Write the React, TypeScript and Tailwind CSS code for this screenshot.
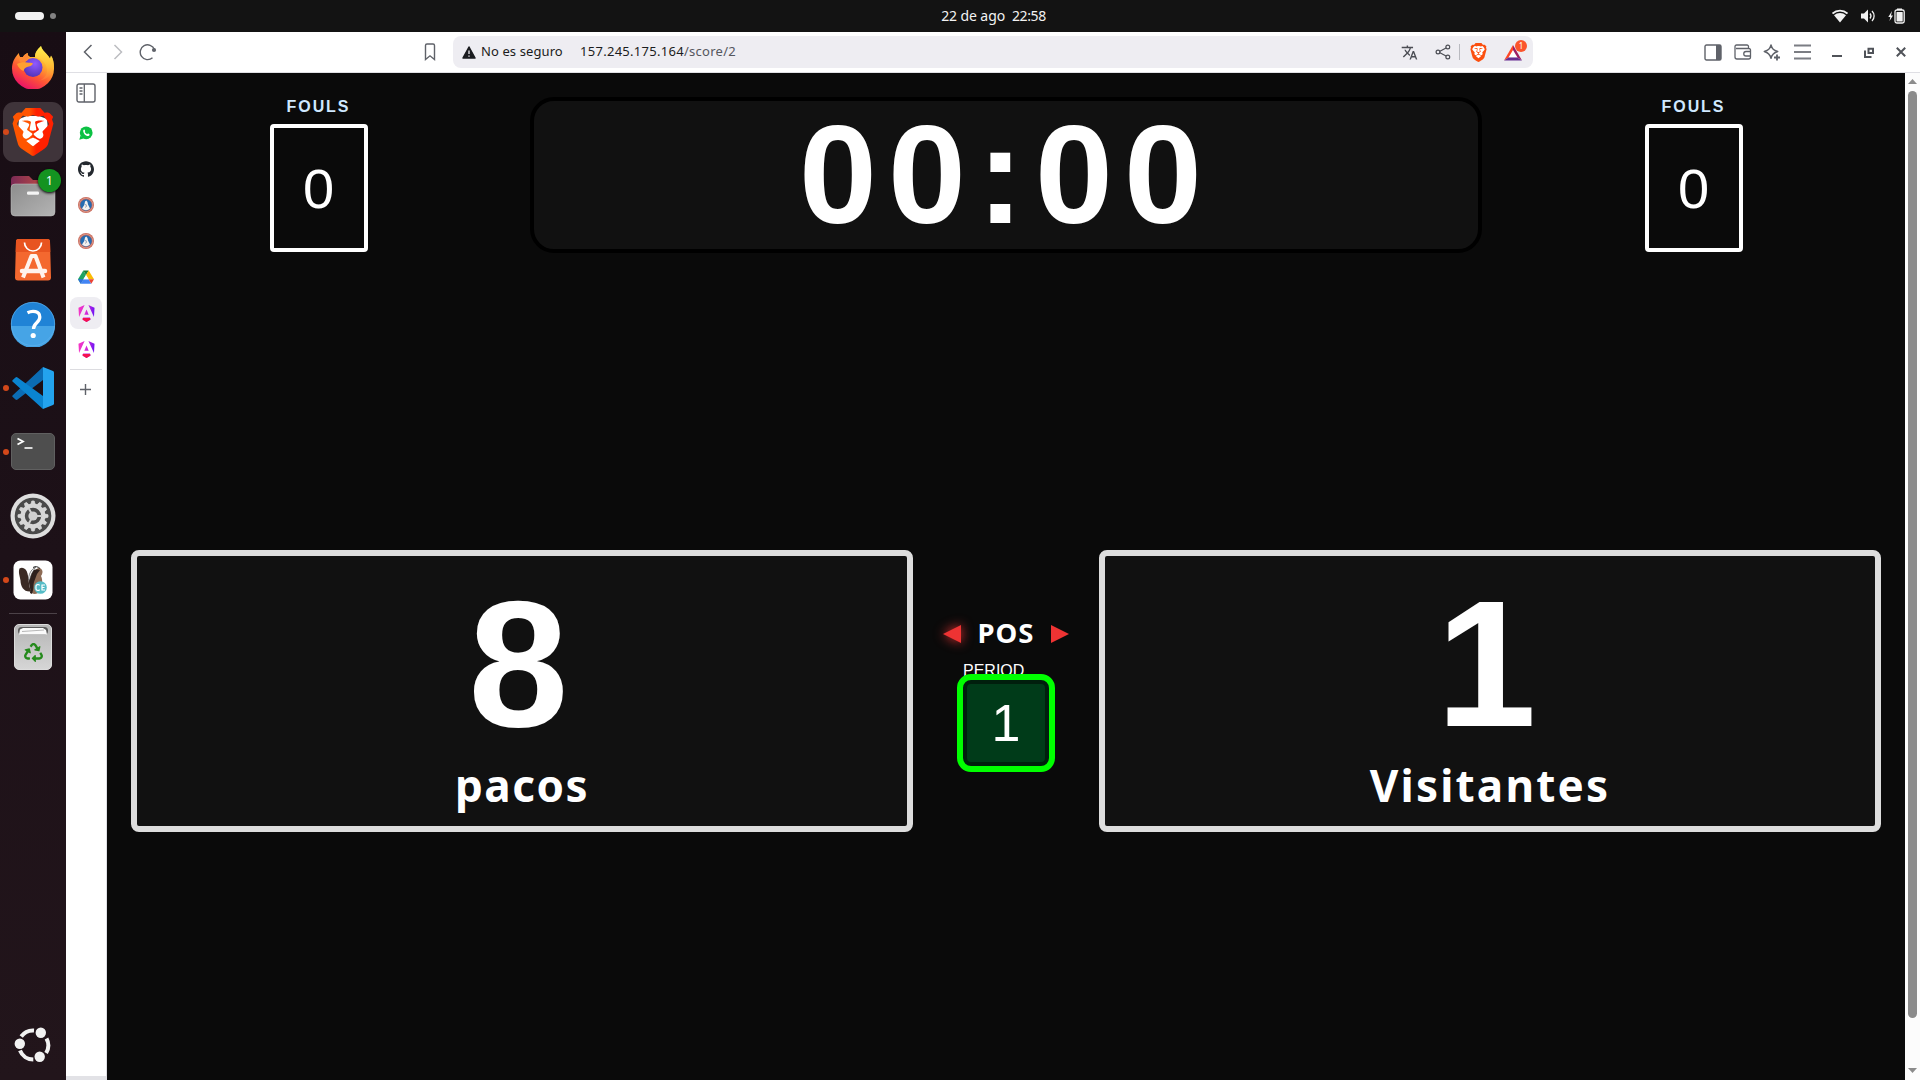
import React from "react";
import { SiBrave, SiGithub, SiAngular } from "react-icons/si";
import { MdTranslate } from "react-icons/md";
import { FaRecycle } from "react-icons/fa";

const ui = "font-['Noto_Sans',sans-serif]";

function Defs() {
  return (
    <svg className="absolute h-0 w-0" aria-hidden>
      <defs>
        <linearGradient id="brave" x1="0" x2="1" y1="0" y2="0">
          <stop offset="0" stopColor="#ff5500" />
          <stop offset="0.41" stopColor="#ff5500" />
          <stop offset="0.58" stopColor="#ff2000" />
          <stop offset="1" stopColor="#ff2000" />
        </linearGradient>
        <linearGradient id="angular" x1="0" x2="1" y1="0.3" y2="0.4">
          <stop offset="0" stopColor="#f637c4" />
          <stop offset="0.5" stopColor="#d62ad9" />
          <stop offset="1" stopColor="#6c14f5" />
        </linearGradient>
        <linearGradient id="foxBody" x1="0.8" x2="0.25" y1="0" y2="1">
          <stop offset="0" stopColor="#fff44f" />
          <stop offset="0.35" stopColor="#ffb02e" />
          <stop offset="0.65" stopColor="#ff5634" />
          <stop offset="1" stopColor="#e80a6e" />
        </linearGradient>
        <linearGradient id="foxTail" x1="0.5" x2="0.5" y1="0" y2="1">
          <stop offset="0" stopColor="#fff44f" />
          <stop offset="0.6" stopColor="#ffb835" />
          <stop offset="1" stopColor="#ff7139" />
        </linearGradient>
        <radialGradient id="globe" cx="0.6" cy="0.3" r="0.8">
          <stop offset="0" stopColor="#9059ff" />
          <stop offset="1" stopColor="#4b2fb0" />
        </radialGradient>
        <linearGradient id="grey" x1="0" x2="1" y1="0" y2="1">
          <stop offset="0" stopColor="#8d8d8d" />
          <stop offset="1" stopColor="#b4b4b4" />
        </linearGradient>
        <linearGradient id="folder" x1="0" x2="1">
          <stop offset="0" stopColor="#7b2a55" />
          <stop offset="1" stopColor="#d2563f" />
        </linearGradient>
        <linearGradient id="trash" x1="0" x2="0" y1="0" y2="1">
          <stop offset="0" stopColor="#b5b5b5" />
          <stop offset="1" stopColor="#d6d6d6" />
        </linearGradient>
      </defs>
    </svg>
  );
}

function Firefox() {
  return (
    <svg className="-mt-[2px]" width="44" height="44" viewBox="0 0 44 44">
      <path d="M30 1c-3 3-6 6-6 11l-5 0c-1-1-3-2-2-4-3 1-4 2-5 4l-3 0C8 11 8 9 8 8 4 12 1 17 1 23.500A21 21 0 0 0 43 23.500c0-5-1-10-3-13l-1 3C36 8 31 6 30 1z" fill="url(#foxBody)" />
      <path d="M30 1c-3 3-6 6-6 11 8 2 13 8 12 15-1 5-5 8-9 9 9-1 16-8 16-14 0-5-1-9-3-11l-1 3C36 8 31 6 30 1z" fill="url(#foxTail)" opacity="0.8" />
      <circle cx="22" cy="22.500" r="9.500" fill="url(#globe)" />
      <path d="M6 19c3-2 7-2 10-1.500 2.500.5 4.500 0 6 1-1 2.500-3.500 3-6 3.500-2 .8-3 2-3.500 4C9.500 25 7 22 6 19z" fill="#ffa030" />
      <path d="M8 8c-1 4 0 6 1 9l7-1 2-4c-1-1-2-2-1-4-3 1-4 2-5 4H9c-1-1-1-3-1-4z" fill="#ff8a35" />
    </svg>
  );
}

function BraveLion({ size, fill }: { size: number; fill: string }) {
  return (
    <span className="relative block">
      <svg className="absolute left-0 top-0" width={size} height={size} viewBox="0 0 48 48">
        <path d="M10 11 18 8h12l8 3 1 12-3 9-7 6-5 1-5-1-7-6-3-9z" fill="#fff" />
      </svg>
      <SiBrave className="relative" size={size} fill={fill} />
    </span>
  );
}

function Files() {
  return (
    <svg width="46" height="42" viewBox="0 0 46 42">
      <path d="M1 5a4 4 0 0 1 4-4h14l4 4h18a4 4 0 0 1 4 4v10H1z" fill="url(#folder)" />
      <rect x="1" y="9" width="44" height="32" rx="4" fill="url(#grey)" stroke="#c4c4c4" strokeWidth="0.5" />
      <rect x="17" y="16.500" width="12" height="3.200" rx="1.300" fill="#f4f4f4" />
    </svg>
  );
}

function Software() {
  return (
    <svg width="38" height="44" viewBox="0 0 38 44">
      <path d="M4.500 1h29a2.500 2.500 0 0 1 2.500 2.500l1 36a3 3 0 0 1-3 3H4a3 3 0 0 1-3-3l1-36A2.500 2.500 0 0 1 4.500 1z" fill="#f4682f" />
      <path d="M4.500 1h29a2.500 2.500 0 0 1 2.500 2.500L36.300 14H1.700L2 3.500A2.500 2.500 0 0 1 4.500 1z" fill="#e85420" />
      <path d="M10.500 4.500a8.500 8.500 0 0 0 17 0" fill="none" stroke="#fff" strokeWidth="1.700" />
      <path d="M9 39.500 17.500 18h4L29.500 39.500" fill="none" stroke="#fff3ed" strokeWidth="4" strokeLinejoin="round" />
      <path d="M8 33h23" stroke="#fff3ed" strokeWidth="4.500" strokeLinecap="round" />
    </svg>
  );
}

function Help() {
  return (
    <svg width="46" height="46" viewBox="0 0 46 46">
      <circle cx="23" cy="23" r="22" fill="#2083d6" />
      <path d="M1 25a22 22 0 0 0 44 0z" fill="#46a4e6" />
      <circle cx="23" cy="23" r="21.700" fill="none" stroke="#5eb2ee" strokeWidth="0.700" />
      <path d="M17.500 11.700c5-2.500 12.300-1.800 12.300 4.300 0 6-6.300 5.500-6.300 12" fill="none" stroke="#fff" strokeWidth="3.300" />
      <circle cx="23.200" cy="34.500" r="2.600" fill="#fff" />
    </svg>
  );
}

function Code() {
  return (
    <svg width="44" height="44" viewBox="0 0 44 44">
      <path d="M1.500 29.500 32 1v13L6.500 33.500a1.500 1.500 0 0 1-2 0l-3-2.700a1 1 0 0 1 0-1.300z" fill="#0b6cb4" />
      <path d="M1.500 15.500 32 43V30L6.500 11.500a1.500 1.500 0 0 0-2 0l-3 2.700a1 1 0 0 0 0 1.300z" fill="#0a84d0" />
      <path d="M32 1l10 4a2 2 0 0 1 1 1.500v31a2 2 0 0 1-1 1.500l-10 4z" fill="#23a3ee" />
    </svg>
  );
}

function Terminal() {
  return (
    <svg className="-mt-px" width="44" height="37" viewBox="0 0 44 37">
      <rect x="0.500" y="0.500" width="43" height="36" rx="4.500" fill="#4e4e4e" stroke="#606060" />
      <path d="M6.500 5.500 12 8.500 6.500 11.500" fill="none" stroke="#fff" strokeWidth="1.800" />
      <path d="M13.500 15h8" stroke="#fff" strokeWidth="1.600" />
    </svg>
  );
}

function Settings() {
  const teeth = Array.from({ length: 12 }, (_, i) => i * 30);
  return (
    <svg width="46" height="46" viewBox="0 0 46 46">
      <circle cx="23" cy="23" r="22.500" fill="#dedede" />
      <circle cx="23" cy="23" r="18.300" fill="#4a4a4a" />
      {teeth.map((a) => (
        <path key={a} d="M21 11l.8-3h2.400L25 11z" fill="#d6d6d6" stroke="#d6d6d6" strokeWidth="0.800" transform={`rotate(${a} 23 23)`} />
      ))}
      <circle cx="23" cy="23" r="10.300" fill="none" stroke="#d6d6d6" strokeWidth="4.200" />
      <circle cx="23" cy="23" r="4.600" fill="#d0d0d0" />
      <path d="M23 23h-8M23 23l4.500-8M23 23l4.500 8" stroke="#d0d0d0" strokeWidth="2" transform="rotate(180 23 23)" />
    </svg>
  );
}

function Beaver() {
  return (
    <svg width="40" height="40" viewBox="0 0 40 40">
      <rect x="0.500" y="0.500" width="39" height="39" rx="7" fill="#fff" />
      <path d="M6.500 8.500c3-2 7 0 8 5 1.500 6 1 11 3.500 18-7 1-10.500-5-10.500-11C7 16.500 5 12.500 6.500 8.500z" fill="#3a2a24" />
      <path d="M17 22c0-5 2-10 6-12 2-3 5-2 6 0 1 1.500.5 4-1 6 2 4 1.500 10-1 15-2 3-6 4-8 2 1-3-1-7-2-11z" fill="#8d6b55" />
      <path d="M19 12c2-3 5-3.500 8-2l-3 4-3 8c-1 4 0 7-2 12l-2-1c1-5-1-7-1-11s1-7 3-10z" fill="#2e211d" />
      <path d="M15.500 20c0-5 2-10 7-13l-4 7-2 6z" fill="#fff" stroke="#333" strokeWidth="0.600" />
      <path d="M20 7.500c2-1.500 5-1 7 1" fill="none" stroke="#222" strokeWidth="1" />
      <circle cx="27.500" cy="27.500" r="6.300" fill="#55bcc7" />
      <path d="M26.600 25.400a2 2 0 0 0-3.600.6v3a2 2 0 0 0 3.600.6M32 25h-3v5h3M29 27.500h2.500" fill="none" stroke="#fff" strokeWidth="1.200" />
    </svg>
  );
}

function Trash() {
  return (
    <div className="relative h-[46px] w-[38px]">
      <svg width="38" height="46" viewBox="0 0 38 46">
        <rect x="0.500" y="0.500" width="37" height="45" rx="4.500" fill="url(#trash)" stroke="#dcdcdc" />
        <rect x="4" y="3" width="30" height="7.500" rx="3.500" fill="#5c5c5c" />
        <path d="M6 5.500 9 4h20l3 2 1 4.500H5z" fill="#fafafa" />
        <path d="M8 7.500 30 6" stroke="#999" strokeWidth="0.700" />
      </svg>
      <FaRecycle className="absolute left-[10px] top-[19px] text-[#258a1c]" size={19} />
    </div>
  );
}

function UbuntuRing() {
  return (
    <svg width="38" height="38" viewBox="0 0 38 38">
      <g fill="none" stroke="#f2f2f2" strokeWidth="4">
        <path d="M7.200 10.500A14.600 14.600 0 0 1 20 4.500" />
        <path d="M32.500 12.500a14.600 14.600 0 0 1-.4 14.500" />
        <path d="M6 24.500A14.600 14.600 0 0 0 19.300 33.600" />
      </g>
      <g fill="#f2f2f2">
        <circle cx="5.800" cy="17.700" r="5.200" />
        <circle cx="26.800" cy="6.700" r="5.200" />
        <circle cx="25.700" cy="30.800" r="5.200" />
      </g>
    </svg>
  );
}

function Badge() {
  return (
    <svg width="16" height="16" viewBox="0 0 16 16">
      <circle cx="8" cy="8" r="8" fill="#c96a5a" />
      <circle cx="8" cy="8" r="6.800" fill="none" stroke="#e3b0a5" strokeWidth="0.600" />
      <circle cx="8" cy="8" r="5.800" fill="#256bb0" />
      <path d="M4 11.500 6.300 8 7 4.500 8.300 3.500 9.500 5l.5 2.500 2 4a5.500 5.500 0 0 1-8 0z" fill="#f3f0ee" />
      <path d="M7.500 7 8.500 9l-1 1.500" fill="none" stroke="#5f7590" strokeWidth="0.700" />
    </svg>
  );
}

function Drive() {
  return (
    <svg width="16" height="14" viewBox="0 0 16 14">
      <path d="M5.300.5 8 5 2.700 13.700 0 9.200z" fill="#1ea362" />
      <path d="M5.300.5h5.400L8 5z" fill="#188038" />
      <path d="M10.700.5 16 9.200h-5.400L8 5z" fill="#fbbc04" />
      <path d="M5.400 9.200h5.200L13.300 13.700H2.700z" fill="#4285f4" />
      <path d="M10.600 9.200H16l-2.700 4.500z" fill="#ea4335" />
      <path d="M0 9.200h5.400l-2.700 4.500z" fill="#2f6fe0" />
      <path d="M8 5 5.400 9.200h5.200z" fill="#fff" />
    </svg>
  );
}

function Angular() {
  return (
    <div className="relative h-[17px] w-[17px]">
      <SiAngular size={17} fill="url(#angular)" />
      <svg className="absolute left-0 top-0" width="17" height="17" viewBox="0 0 16 16">
        <path d="M4.500 12.200h7L11.500 13.800 8 16l-3.500-2.200z" fill="#f5124f" />
      </svg>
    </div>
  );
}

function Whatsapp() {
  return (
    <svg width="14" height="14" viewBox="0 0 14 14">
      <circle cx="7.200" cy="6.800" r="6.400" fill="#0bc143" />
      <path d="M.3 13.800 1.500 9.500l3 3z" fill="#0bc143" />
      <path d="M4.200 4.500c.5-1.300 1.500-1 1.700-.3.500 1.200.1 1.300-.2 1.800.6 1 1.400 1.700 2.400 2.200.6-.7.800-1 1.700-.4 1.300.6.900 1.700-.3 2.200C6.500 10.300 4 7 4.200 4.500z" fill="#fff" />
    </svg>
  );
}

function TopBar() {
  return (
    <header className={`grid h-8 grid-cols-3 items-center bg-[#131313] text-[#f2f2f2] ${ui}`}>
      <div className="flex items-center gap-1.5 pl-[15px]">
        <span className="h-2 w-[29px] rounded-full bg-[#f2f2f2]" />
        <span className="h-1.5 w-1.5 rounded-full bg-[#828282]" />
      </div>
      <div className="flex justify-center gap-[7px] pl-[67px] text-[14px] leading-[30px] whitespace-nowrap">
        <span className="tracking-[-0.1px]">22 de ago</span>
        <span className="tracking-[-0.4px]">22:58</span>
      </div>
      <div className="flex items-center justify-end gap-[13px] pr-[15px]">
        <svg width="16" height="14" viewBox="0 0 16 14">
          <path d="M.5 4.500a11 11 0 0 1 15 0" fill="none" stroke="#f2f2f2" strokeWidth="1.800" />
          <path d="M2 6.300a9 9 0 0 1 12 0L8 13.500z" fill="#f2f2f2" />
        </svg>
        <svg width="14" height="14" viewBox="0 0 14 14">
          <path d="M0 4.500h3L7 .5v13l-4-4H0z" fill="#f2f2f2" />
          <path d="M9 4.500a4 4 0 0 1 0 5M11 2a7 7 0 0 1 0 10" fill="none" stroke="#f2f2f2" strokeWidth="1.300" />
        </svg>
        <svg width="17" height="16" viewBox="0 0 17 16">
          <path d="M4 3 .3 9h2L1.500 13 5 7.500H3z" fill="#f2f2f2" />
          <rect x="7" y="2" width="9.200" height="13" rx="1.800" fill="none" stroke="#f2f2f2" strokeWidth="1.300" />
          <rect x="9" y="0.500" width="5" height="1.500" fill="#f2f2f2" />
          <rect x="8.500" y="4" width="6.200" height="9.500" rx="0.500" fill="#f2f2f2" />
        </svg>
      </div>
    </header>
  );
}

function Slot({ children, dot, active }: { children: React.ReactNode; dot?: boolean; active?: boolean }) {
  return (
    <div className="relative flex h-16 w-[66px] items-center justify-center">
      {dot && <span className="absolute left-[3px] top-[29px] z-10 h-1.5 w-1.5 rounded-full bg-[#d3481a]" />}
      <div className={active ? "flex h-[60px] w-[60px] items-center justify-center rounded-[11px] bg-[#3f343a]" : "flex items-center justify-center"}>
        {children}
      </div>
    </div>
  );
}

function Dock() {
  return (
    <nav className="flex w-[66px] flex-col bg-linear-to-b from-[#180d14] via-[#1d1118] to-[#22151b] pt-1">
      <Slot><Firefox /></Slot>
      <Slot dot active><BraveLion size={48} fill="url(#brave)" /></Slot>
      <Slot>
        <div className="relative">
          <Files />
          <span className={`absolute -right-[5px] -top-[6px] flex h-[23px] w-[23px] items-center justify-center rounded-full bg-[#149321] text-[12px] text-white shadow-[0_1px_3px_#000] ${ui}`}>1</span>
        </div>
      </Slot>
      <Slot><Software /></Slot>
      <Slot><Help /></Slot>
      <Slot dot><Code /></Slot>
      <Slot dot><Terminal /></Slot>
      <Slot><Settings /></Slot>
      <Slot dot><Beaver /></Slot>
      <div className="ml-[9px] mt-[1px] h-px w-12 bg-[#4c4248]" />
      <div className="mt-[10px] flex justify-center"><Trash /></div>
      <div className="mb-[16px] mt-auto flex justify-center"><UbuntuRing /></div>
    </nav>
  );
}

const ink = "#5f6269";

function Toolbar() {
  return (
    <div className={`flex h-[41px] items-center border-b border-[#dfdfe4] bg-white ${ui}`}>
      <svg className="ml-[17px]" width="10" height="16" viewBox="0 0 10 16"><path d="M8.500 1 1.500 8l7 7" fill="none" stroke={ink} strokeWidth="1.500" /></svg>
      <svg className="ml-[20px]" width="10" height="16" viewBox="0 0 10 16"><path d="M1.500 1l7 7-7 7" fill="none" stroke="#bcbdc1" strokeWidth="1.500" /></svg>
      <svg className="ml-[16px]" width="18" height="18" viewBox="0 0 18 18">
        <path d="M13.500 14.800A7.400 7.400 0 1 1 15.500 6.500" fill="none" stroke={ink} strokeWidth="1.400" />
        <circle cx="15" cy="7" r="2.100" fill={ink} />
      </svg>
      <svg className="ml-[266px]" width="14" height="18" viewBox="0 0 14 18"><path d="M2.500 16.500V2.500a1.500 1.500 0 0 1 1.500-1.500h6a1.500 1.500 0 0 1 1.500 1.500v14L7 12.800z" fill="none" stroke={ink} strokeWidth="1.400" /></svg>
      <div className="ml-[16px] flex h-8 w-[1080px] items-center rounded-lg bg-[#eeedf2] pl-[9px]">
        <svg width="14" height="13" viewBox="0 0 14 13">
          <path d="M7 1 13 12H1z" fill="#1b1c20" stroke="#1b1c20" strokeWidth="1.500" strokeLinejoin="round" />
          <path d="M7 4.500v3.500M7 9.500v1.300" stroke="#eeedf2" strokeWidth="1.300" />
        </svg>
        <span className="ml-[5px] w-[99px] text-[13px] tracking-[0.1px] whitespace-nowrap text-[#1b1c20]">No es seguro</span>
        <span className="w-[200px] text-[13px] tracking-[0.28px] whitespace-nowrap text-[#1b1c20]">157.245.175.164<span className="text-[#55575e]">/score/2</span></span>
        <div className="ml-auto flex items-center">
          <MdTranslate size={17} color="#4b4d54" />
          <svg className="ml-[17px]" width="16" height="16" viewBox="0 0 16 16">
            <path d="M3.500 8 12 3.500M3.500 8l8.500 4.500" stroke="#4b4d54" strokeWidth="1.200" />
            <g fill="#eeedf2" stroke="#4b4d54" strokeWidth="1.200"><circle cx="3" cy="8" r="1.900" /><circle cx="12.800" cy="3" r="1.900" /><circle cx="12.800" cy="13" r="1.900" /></g>
          </svg>
          <span className="ml-[8px] h-4 w-px bg-[#b9bac0]" />
          <span className="ml-[9px]"><BraveLion size={19} fill="#fb4f0f" /></span>
          <span className="relative ml-[16px] mr-[11px] mt-[1px] block">
            <svg width="18" height="16" viewBox="0 0 18 16">
              <path d="M9 4.500 13.500 12h-9z" fill="#fff" />
              <path d="M9 0 0 15.500l4.500-3L9 5z" fill="#ff4724" />
              <path d="M9 0v5l4.500 7.500 4.500 3z" fill="#9e1f63" />
              <path d="M0 15.500h18l-4.500-3h-9z" fill="#662d91" />
            </svg>
            <span className="absolute -right-[5px] -top-[5px] flex h-3 w-3 items-center justify-center rounded-full bg-[#fb542b] text-[8px] text-white">1</span>
          </span>
        </div>
      </div>
      <div className="ml-auto flex items-center pr-[14px]">
        <svg width="18" height="17" viewBox="0 0 18 17"><rect x="1" y="1" width="16" height="15" rx="1.500" fill="none" stroke={ink} strokeWidth="1.400" /><rect x="12" y="1" width="5" height="15" fill={ink} /></svg>
        <svg className="ml-[12px]" width="18" height="16" viewBox="0 0 18 16">
          <path d="M14.500 4.500V2.500a1.500 1.500 0 0 0-1.500-1.500H2.500A1.500 1.500 0 0 0 1 2.500v10.500a2 2 0 0 0 2 2h11.500a2 2 0 0 0 2-2V6a1.500 1.500 0 0 0-1.500-1.500H2M16.500 7.500h-4.500a2.200 2.200 0 0 0 0 4.500h4.500" fill="none" stroke={ink} strokeWidth="1.300" />
        </svg>
        <svg className="ml-[11px]" width="18" height="17" viewBox="0 0 18 17">
          <path d="M8 1c1 4 2.500 5.300 6.700 6.500C10.500 8.700 9 10.200 8 14.300 7 10.200 5.500 8.700 1.300 7.500 5.500 6.300 7 5 8 1z" fill="none" stroke={ink} strokeWidth="1.500" strokeLinejoin="round" />
          <path d="M14 10.500v6M11 13.500h6" stroke={ink} strokeWidth="1.800" />
        </svg>
        <svg className="ml-[13px]" width="17" height="16" viewBox="0 0 17 16"><path d="M0 1.500h17M0 8h17M0 14.500h17" stroke="#7b7d83" strokeWidth="1.800" /></svg>
        <svg className="ml-[21px]" width="10" height="12" viewBox="0 0 10 12"><path d="M0 10h10" stroke="#505359" strokeWidth="2" /></svg>
        <svg className="ml-[22px]" width="10" height="11" viewBox="0 0 10 11"><path d="M4.500 1.800h4.500v4.200H4.500zM1 3.500v6.500h6.500" fill="none" stroke="#505359" strokeWidth="2" /></svg>
        <svg className="ml-[22px]" width="10" height="10" viewBox="0 0 10 10"><path d="M.8.800l8.400 8.400M9.200.800.800 9.200" stroke="#505359" strokeWidth="2" /></svg>
      </div>
    </div>
  );
}

function TabCell({ children, active }: { children: React.ReactNode; active?: boolean }) {
  return (
    <div className={`mb-1 flex h-8 w-8 items-center justify-center rounded-lg ${active ? "bg-[#eeedf2]" : ""}`}>{children}</div>
  );
}

function Tabs() {
  return (
    <aside className="flex w-[41px] flex-col border-r border-[#dfdfe4] bg-white">
      <div className="flex flex-col items-center">
        <svg className="mb-[14px] mt-[10px]" width="20" height="20" viewBox="0 0 20 20">
          <rect x="1" y="1" width="18" height="18" rx="2" fill="none" stroke={ink} strokeWidth="1.400" />
          <path d="M8.300 1v18" stroke={ink} strokeWidth="1.300" />
          <path d="M3.500 5h3M3.500 8h3M3.500 11h3" stroke={ink} strokeWidth="1.300" />
        </svg>
        <TabCell><Whatsapp /></TabCell>
        <TabCell><SiGithub size={16} color="#24292f" /></TabCell>
        <TabCell><Badge /></TabCell>
        <TabCell><Badge /></TabCell>
        <TabCell><Drive /></TabCell>
        <TabCell active><Angular /></TabCell>
        <TabCell><Angular /></TabCell>
        <div className="h-px w-8 bg-[#dcdce0]" />
        <svg className="mr-px mt-[14px]" width="11" height="11" viewBox="0 0 11 11"><path d="M5.500 0v11M0 5.500h11" stroke={ink} strokeWidth="1.400" /></svg>
      </div>
      <div className="mt-auto h-1 w-10 bg-[#e2e2e6]" />
    </aside>
  );
}

function Fouls({ value }: { value: number }) {
  return (
    <div className="flex w-[375px] flex-col items-center">
      <div className="h-[27px] pt-[1px] text-[16px] leading-[18px] font-bold tracking-[0.12em] text-[#cfe8ff]">FOULS</div>
      <div className="flex h-32 w-[98px] items-center justify-center rounded border-4 border-white pt-[2px] text-[56px] leading-none text-white">{value}</div>
    </div>
  );
}

function Team({ score, name, tracking }: { score: number; name: string; tracking: string }) {
  return (
    <section className="flex h-[282px] w-[782px] flex-col items-center rounded-lg border-6 border-[#ddd] bg-[#111] text-white">
      <div className="mt-[18px] text-[180px] leading-[180px] font-bold tracking-[0.04em]">{score}</div>
      <div className={`mt-[5px] text-[44px] leading-[52px] font-bold ${tracking} ${ui}`}>{name}</div>
    </section>
  );
}

function Scoreboard() {
  return (
    <main className="flex w-[1798px] flex-col bg-[#0a0a0a] p-6 font-['Liberation_Sans',Arial,sans-serif]">
      <div className="flex gap-6">
        <Fouls value={0} />
        <div className="flex h-[156px] w-[952px] items-center justify-center rounded-3xl border-4 border-black bg-[#111] text-[140px] leading-none font-bold tracking-[0.08em] text-white">00:00</div>
        <Fouls value={0} />
      </div>
      <div className="mt-[297px] flex justify-between">
        <Team score={8} name="pacos" tracking="tracking-[1.5px]" />
        <div className="flex flex-col items-center pt-[64px] text-white">
          <div className="flex h-[38px] items-center">
            <svg className="mt-[2px] drop-shadow-[0_0_6px_#e33]" width="18" height="18" viewBox="0 0 18 18"><path d="M18 0v18L0 9z" fill="#ee3333" /></svg>
            <span className={`w-[90px] text-center text-[27.500px] leading-[38px] font-bold tracking-[1px] ${ui}`}>POS</span>
            <svg className="mt-[2px]" width="18" height="18" viewBox="0 0 18 18"><path d="M0 0v18l18-9z" fill="#ee3333" /></svg>
          </div>
          <div className="mt-[10px] h-[12px] w-[86px] text-[16px] leading-[18px]">PERIOD</div>
          <div className="relative rounded-[14px] border-6 border-[#00ff00] bg-[#001f0d] p-1">
            <div className="flex h-[78px] w-[78px] items-center justify-center rounded bg-[#003b19] text-[52px] leading-none">1</div>
          </div>
        </div>
        <Team score={1} name="Visitantes" tracking="tracking-[2.2px]" />
      </div>
    </main>
  );
}

function Scrollbar() {
  return (
    <div className="flex w-[15px] flex-col items-center bg-[#fcfcfc]">
      <svg className="mt-[6px]" width="9" height="5" viewBox="0 0 9 5"><path d="M0 5 4.500 0 9 5z" fill="#8b8b8b" /></svg>
      <div className="mt-[7px] h-[927px] w-[9px] rounded-full bg-[#8b8b8b]" />
      <svg className="mb-[7px] mt-auto" width="9" height="5" viewBox="0 0 9 5"><path d="M0 0h9L4.500 5z" fill="#8b8b8b" /></svg>
    </div>
  );
}

export default function App() {
  return (
    <div className="flex h-[1080px] w-[1920px] flex-col overflow-hidden">
      <Defs />
      <TopBar />
      <div className="flex min-h-0 flex-1">
        <Dock />
        <div className="flex min-w-0 flex-1 flex-col">
          <Toolbar />
          <div className="flex min-h-0 flex-1">
            <Tabs />
            <Scoreboard />
            <Scrollbar />
          </div>
        </div>
      </div>
    </div>
  );
}
